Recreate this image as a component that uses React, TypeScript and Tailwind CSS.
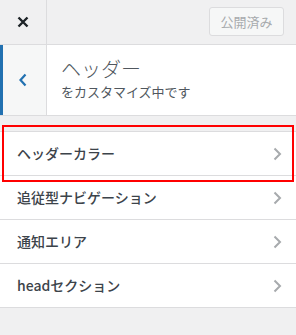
import React from "react";

const sections = ["ヘッダーカラー", "追従型ナビゲーション", "通知エリア", "headセクション"];

function Chevron({ className }: { className?: string }) {
  return (
    <svg width="10" height="16" viewBox="0 0 10 16" className={className} fill="none">
      <path d="M2.5 2.5 L8 8 L2.5 13.5" stroke="currentColor" strokeWidth="2" />
    </svg>
  );
}

export default function App() {
  return (
    <div
      className="w-[296px] h-[335px] bg-[#f0f0f1] relative overflow-hidden"
      style={{ fontFamily: '"Noto Sans CJK JP", "Noto Sans", sans-serif' }}
    >
      {/* Top bar */}
      <div className="h-[45px] flex border-b border-[#dcdcde] bg-[#f0f0f1]">
        <div className="w-[47px] border-r border-[#dcdcde] flex items-center justify-center">
          <svg width="12" height="12" viewBox="0 0 12 12" className="text-[#1d2327]">
            <path d="M1.5 1.5 L10.5 10.5 M10.5 1.5 L1.5 10.5" stroke="currentColor" strokeWidth="2.4" />
          </svg>
        </div>
        <div className="flex-1 flex items-center justify-end pr-[12px]">
          <div className="w-[75px] h-[29px] mb-[1px] rounded-[3px] border border-[#dcdcde] bg-[#f6f7f7] text-[#a7aaad] text-[13px] flex items-center justify-center">
            公開済み
          </div>
        </div>
      </div>

      {/* Section header */}
      <div className="h-[71px] flex bg-white border-b border-[#dcdcde]">
        <div className="w-[47px] bg-[#f6f7f7] border-l-[3px] border-l-[#2271b1] border-r border-r-[#dcdcde] flex items-center justify-center pr-[3px]">
          <svg width="10" height="14" viewBox="0 0 10 14" className="text-[#2271b1]">
            <path d="M7.5 1.5 L2.5 7 L7.5 12.5" stroke="currentColor" strokeWidth="2.2" fill="none" />
          </svg>
        </div>
        <div className="flex flex-col justify-center pl-[14px] pb-[3px] text-[#50575e]">
          <div className="text-[20px] leading-[26px] font-light">ヘッダー</div>
          <div className="text-[13px] leading-[18px] mt-[1px]">をカスタマイズ中です</div>
        </div>
      </div>

      {/* Sections list */}
      <div className="mt-[15px] bg-white border-t border-[#dcdcde]">
        {sections.map((s) => (
          <div
            key={s}
            className="h-[44px] flex items-center justify-between pl-[17px] pr-[14px] border-b border-[#dcdcde] text-[14px] text-[#3c434a] font-medium"
          >
            <span>{s}</span>
            <Chevron className="text-[#a7aaad]" />
          </div>
        ))}
      </div>

      {/* Highlight annotation */}
      <div className="absolute left-[2px] top-[125px] w-[292px] h-[57px] border-2 border-[#ff0000] pointer-events-none" />
    </div>
  );
}
